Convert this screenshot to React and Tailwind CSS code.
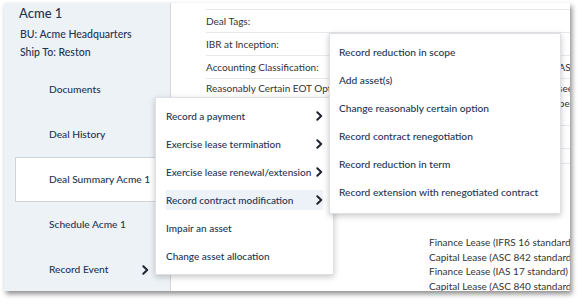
import React from "react";

const Chevron = ({ className = "" }) => (
  <svg width="7" height="10" viewBox="0 0 7 10" className={className} fill="none">
    <path d="M1.3 1.2 L5.2 5 L1.3 8.8" stroke="#1f2530" strokeWidth="2" strokeLinecap="round" strokeLinejoin="round" />
  </svg>
);

const mainItems = [
  { t: "Record a payment", c: true },
  { t: "Exercise lease termination", c: true },
  { t: "Exercise lease renewal/extension", c: true },
  { t: "Record contract modification", c: true, active: true },
  { t: "Impair an asset" },
  { t: "Change asset allocation" },
];

const subItems = [
  "Record reduction in scope",
  "Add asset(s)",
  "Change reasonably certain option",
  "Record contract renegotiation",
  "Record reduction in term",
  "Record extension with renegotiated contract",
];

export default function App() {
  return (
    <div className="w-[582px] h-[304px] bg-white overflow-hidden font-['Lato','Open_Sans',sans-serif]">
      <div className="ml-[4px] mt-[3px] w-[566px] h-[288px] flex relative bg-white shadow-[2px_3px_5px_rgba(0,0,0,0.45)]">
        {/* Sidebar */}
        <div className="w-[167px] shrink-0 bg-[#edf2f6] border-r border-[#d3d8dd] flex flex-col text-[#243453] font-medium">
          <div className="pl-[15px] text-[13px] leading-[20px]">Acme 1</div>
          <div className="pl-[16px] mt-[2px] text-[10.5px] leading-[18px]">BU: Acme Headquarters</div>
          <div className="pl-[16px] text-[10.5px] leading-[18px]">Ship To: Reston</div>
          <div className="mt-[6px] flex flex-col text-[10.2px]">
            <div className="h-[45px] flex items-center pl-[45px]">Documents</div>
            <div className="h-[45px] flex items-center pl-[45px]">Deal History</div>
            <div className="h-[45px] flex items-center ml-[11px] -mr-[1px] pl-[33px] bg-white border border-[#cfd4d9]">Deal Summary Acme 1</div>
            <div className="h-[45px] flex items-center pl-[45px]">Schedule Acme 1</div>
            <div className="h-[45px] flex items-center pl-[45px]">
              <span className="w-[93px]">Record Event</span>
              <Chevron />
            </div>
          </div>
        </div>

        {/* Main */}
        <div className="flex-1 overflow-hidden pl-[35px] pt-[6px] text-[10px] text-[#333] whitespace-nowrap">
          <div className="border-t border-[#e6e8ea] h-[23px] flex items-center">Deal Tags:</div>
          <div className="border-t border-[#e6e8ea] h-[23px] flex items-center">IBR at Inception:</div>
          <div className="border-t border-[#e6e8ea] h-[23px] flex items-center">
            <span className="w-[250px] shrink-0">Accounting Classification:</span>
            <span className="w-[144px] shrink-0 text-right">Finance Lease (ASC 842)</span>
          </div>
          <div className="border-t border-[#e6e8ea] h-[47px] flex items-start pt-[2px] leading-[15px]">
            <span className="w-[250px] shrink-0">Reasonably Certain EOT Option:</span>
            <span className="flex flex-col">
              <span className="w-[117px] text-right">Exercised by Lessee</span>
              <span className="w-[131px] text-right">over the lease period</span>
            </span>
          </div>
          <div className="border-t border-[#e6e8ea] h-[23px] flex items-center">Lease Term:</div>
          <div className="border-t border-[#e6e8ea] h-[15px]"></div>
          <div className="border-t border-[#e6e8ea]"></div>
          <div className="ml-[223px] mt-[71px] leading-[14.5px] flex flex-col">
            <span>Finance Lease (IFRS 16 standard) and</span>
            <span>Capital Lease (ASC 842 standard) and</span>
            <span>Finance Lease (IAS 17 standard) and</span>
            <span>Capital Lease (ASC 840 standard) and</span>
          </div>
        </div>

        {/* Main menu */}
        <div className="absolute left-[151px] top-[94px] w-[179px] bg-white border border-[#dde1e5] shadow-[0_2px_6px_rgba(0,0,0,0.22)] py-[4px] text-[10px] font-medium text-[#243453] whitespace-nowrap">
          {mainItems.map((it) => (
            <div key={it.t} className="h-[28px] flex items-center px-[10px]">
              <div className={"flex-1 h-[20px] flex items-center justify-between " + (it.active ? "bg-[#edf2f8]" : "")}>
                <span>{it.t}</span>
                {it.c && <Chevron />}
              </div>
            </div>
          ))}
        </div>

        {/* Sub menu */}
        <div className="absolute left-[325px] top-[30px] w-[232px] bg-white border border-[#dde1e5] shadow-[0_2px_6px_rgba(0,0,0,0.22)] pt-[5px] pb-[6px] text-[10.2px] font-medium text-[#243453] whitespace-nowrap">
          {subItems.map((t) => (
            <div key={t} className="h-[28px] flex items-center pl-[9px]">{t}</div>
          ))}
        </div>
      </div>
    </div>
  );
}
